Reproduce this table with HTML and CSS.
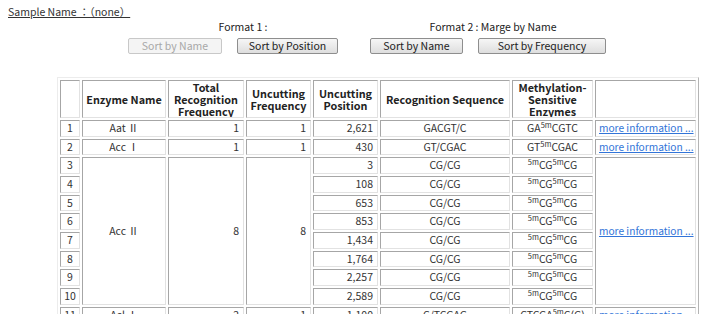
FILE: index.html
```html
<!DOCTYPE html>
<html>
<head>
<meta charset="utf-8">
<title>Enzyme list</title>
<link rel="stylesheet" href="styles.css">
</head>
<body>
<p class="sample">Sample Name ：（none）</p>
<div class="formats">
  <div class="group group-1">
    <div class="label">Format 1 :</div>
    <div class="buttons">
      <button class="btn btn-name" disabled>Sort by Name</button>
      <button class="btn btn-position">Sort by Position</button>
    </div>
  </div>
  <div class="group group-2">
    <div class="label">Format 2 : Marge by Name</div>
    <div class="buttons">
      <button class="btn btn-name2">Sort by Name</button>
      <button class="btn btn-frequency">Sort by Frequency</button>
    </div>
  </div>
</div>
<table class="enzymes">
  <colgroup>
    <col class="c-no"><col class="c-name"><col class="c-total"><col class="c-freq"><col class="c-pos"><col class="c-seq"><col class="c-meth"><col class="c-link">
  </colgroup>
  <thead>
    <tr>
      <th></th>
      <th>Enzyme Name</th>
      <th>Total Recognition Frequency</th>
      <th>Uncutting Frequency</th>
      <th>Uncutting Position</th>
      <th>Recognition Sequence</th>
      <th>Methylation-Sensitive Enzymes</th>
      <th></th>
    </tr>
  </thead>
  <tbody>
    <tr><td class="no">1</td><td class="ctr">Aat Ⅱ</td><td class="num">1</td><td class="num">1</td><td class="num">2,621</td><td class="ctr">GACGT/C</td><td class="ctr">GA<sup class="m">5m</sup>CGTC</td><td class="lnk"><a href="#">more information ...</a></td></tr>
    <tr><td class="no">2</td><td class="ctr">Acc Ⅰ</td><td class="num">1</td><td class="num">1</td><td class="num">430</td><td class="ctr">GT/CGAC</td><td class="ctr">GT<sup class="m">5m</sup>CGAC</td><td class="lnk"><a href="#">more information ...</a></td></tr>
    <tr><td class="no">3</td><td class="ctr" rowspan="8">Acc Ⅱ</td><td class="num" rowspan="8">8</td><td class="num" rowspan="8">8</td><td class="num">3</td><td class="ctr">CG/CG</td><td class="ctr"><sup class="m">5m</sup>CG<sup class="m">5m</sup>CG</td><td class="lnk" rowspan="8"><a href="#">more information ...</a></td></tr>
    <tr><td class="no">4</td><td class="num">108</td><td class="ctr">CG/CG</td><td class="ctr"><sup class="m">5m</sup>CG<sup class="m">5m</sup>CG</td></tr>
    <tr><td class="no">5</td><td class="num">653</td><td class="ctr">CG/CG</td><td class="ctr"><sup class="m">5m</sup>CG<sup class="m">5m</sup>CG</td></tr>
    <tr><td class="no">6</td><td class="num">853</td><td class="ctr">CG/CG</td><td class="ctr"><sup class="m">5m</sup>CG<sup class="m">5m</sup>CG</td></tr>
    <tr><td class="no">7</td><td class="num">1,434</td><td class="ctr">CG/CG</td><td class="ctr"><sup class="m">5m</sup>CG<sup class="m">5m</sup>CG</td></tr>
    <tr><td class="no">8</td><td class="num">1,764</td><td class="ctr">CG/CG</td><td class="ctr"><sup class="m">5m</sup>CG<sup class="m">5m</sup>CG</td></tr>
    <tr><td class="no">9</td><td class="num">2,257</td><td class="ctr">CG/CG</td><td class="ctr"><sup class="m">5m</sup>CG<sup class="m">5m</sup>CG</td></tr>
    <tr><td class="no">10</td><td class="num">2,589</td><td class="ctr">CG/CG</td><td class="ctr"><sup class="m">5m</sup>CG<sup class="m">5m</sup>CG</td></tr>
    <tr><td class="no">11</td><td class="ctr">Acl Ⅰ</td><td class="num">2</td><td class="num">1</td><td class="num">1,100</td><td class="ctr">C/TCGAG</td><td class="ctr">CTCGA<sup class="m">5m</sup>C(G)</td><td class="lnk"><a href="#">more information ...</a></td></tr>
  </tbody>
</table>
</body>
</html>
```
FILE: styles.css
```css
html, body {
  margin: 0;
  padding: 0;
  background: #ffffff;
}
body {
  font-family: "Noto Sans CJK JP", "Noto Sans", sans-serif;
  font-size: 10.5px;
  color: #333333;
}
.sample {
  margin: 0;
  padding: 5px 0 0 8px;
  line-height: 14px;
  text-decoration: underline;
  color: #333333;
}
.formats {
  display: flex;
  gap: 32px;
  margin-left: 128px;
  margin-top: 1px;
}
.group {
  display: flex;
  flex-direction: column;
}
.label {
  line-height: 14px;
  text-align: center;
  color: #222222;
}
.group-1 .label { padding-left: 20px; }
.group-2 .label { padding-left: 10px; }
.buttons {
  display: flex;
  gap: 15px;
  margin-top: 4px;
}
.btn {
  box-sizing: border-box;
  height: 16px;
  padding: 0;
  margin: 0;
  font-family: "Noto Sans CJK JP", "Noto Sans", sans-serif;
  font-size: 10.5px;
  line-height: 14px;
  color: #222222;
  background: linear-gradient(#f6f6f6, #dedede);
  border: 1px solid #8e8e8e;
  border-radius: 2px;
}
.btn:disabled {
  color: #a8a8a8;
  background: #f4f4f4;
  border-color: #c8c8c8;
}
.btn-name { width: 94px; }
.btn-position { width: 101px; }
.btn-name2 { width: 93px; }
.btn-frequency { width: 128px; }

.enzymes {
  margin: 23px 0 0 57px;
  box-sizing: border-box;
  width: 642px;
  table-layout: fixed;
  border-collapse: separate;
  border-spacing: 2px;
  border: 1px solid;
  border-color: #ececec #b4b4b4 #b4b4b4 #ececec;
}
.c-no { width: 20px; }
.c-name { width: 84px; }
.c-total { width: 76px; }
.c-freq { width: 65px; }
.c-pos { width: 65px; }
.c-seq { width: 130px; }
.c-meth { width: 81px; }
.c-link { width: 101px; }

.enzymes th,
.enzymes td {
  box-sizing: border-box;
  border: 1px solid;
  border-color: #a6a6a6 #e2e2e2 #e2e2e2 #a6a6a6;
  white-space: nowrap;
  overflow: hidden;
}
.enzymes th {
  padding: 0 1px;
  font-size: 10.8px;
  line-height: 12px;
  font-weight: bold;
  color: #222222;
  white-space: normal;
  text-align: center;
  vertical-align: middle;
}
.enzymes td {
  padding: 0 4px;
  line-height: 14.67px;
  color: #333333;
  vertical-align: middle;
}
.enzymes td.no { text-align: center; padding: 0; }
.enzymes td.ctr { text-align: center; }
.enzymes td.num { text-align: right; }
.enzymes td.lnk { text-align: left; padding: 0 0 0 3px; }
.enzymes a {
  color: #3274d8;
  font-size: 10.2px;
  text-decoration: underline;
}
.m {
  font-size: 7.5px;
  line-height: 0;
  vertical-align: 4px;
}
```
